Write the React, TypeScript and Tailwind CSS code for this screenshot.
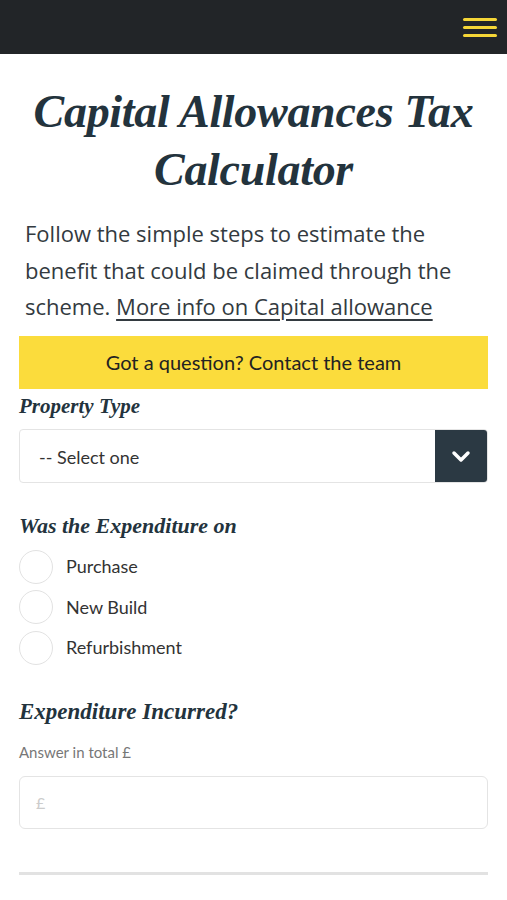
export default function App() {
  const options = ['Purchase', 'New Build', 'Refurbishment'];
  const serif = "font-['Liberation_Serif',serif] italic font-bold text-[#23333d]";
  return (
    <div className="min-h-screen bg-white font-['Lato',sans-serif]">
      <header className="h-[54px] bg-[#222528] flex items-center justify-end pr-[10px]">
        <div className="flex flex-col gap-[5px] w-[34px]">
          <span className="block h-[3px] bg-[#f5d637] rounded-full" />
          <span className="block h-[3px] bg-[#f5d637] rounded-full" />
          <span className="block h-[3px] bg-[#f5d637] rounded-full" />
        </div>
      </header>

      <main className="px-[19px]">
        <h1 className={`${serif} text-center text-[46px] leading-[58px] mt-[29px] tracking-[-0.3px]`}>
          Capital Allowances Tax Calculator
        </h1>
        <p className="font-['Open_Sans',sans-serif] text-[22px] leading-[36.5px] text-[#333a40] pl-[6px] pr-[30px] mt-[16px]">
          Follow the simple steps to estimate the benefit that could be claimed through the scheme.{' '}
          <a href="#" className="underline underline-offset-4">More info on Capital allowance</a>
        </p>

        <button className="w-full h-[53px] mt-[11px] bg-[#fbdc3c] text-[#222] text-[20px]">
          Got a question? Contact the team
        </button>

        <h2 className={`${serif} text-[21px] leading-[32px] mt-[1px]`}>Property Type</h2>
        <div className="mt-[7px] h-[54px] flex border border-[#e4e4e4] rounded-[4px] overflow-hidden">
          <div className="flex-1 flex items-center pl-[19px] pt-[4px] text-[18px] text-[#333]">-- Select one</div>
          <div className="w-[52px] bg-[#2b3943] flex items-center justify-center">
            <svg width="20" height="14" viewBox="0 0 20 14" fill="none">
              <path d="M3 4l7 7 7-7" stroke="white" strokeWidth="3.5" strokeLinecap="round" strokeLinejoin="round" />
            </svg>
          </div>
        </div>

        <h2 className={`${serif} text-[22px] leading-[32px] mt-[27px]`}>Was the Expenditure on</h2>
        <div className="mt-[8px] flex flex-col gap-[6.5px]">
          {options.map(o => (
            <label key={o} className="flex items-center gap-[13px] h-[34px]">
              <span className="w-[34px] h-[34px] rounded-full border border-[#e2e2e2]" />
              <span className="text-[18px] text-[#333]">{o}</span>
            </label>
          ))}
        </div>

        <h2 className={`${serif} text-[23px] leading-[32px] mt-[31px]`}>Expenditure Incurred?</h2>
        <p className="text-[15px] text-[#777] mt-[13px]">Answer in total £</p>
        <div className="mt-[13px] h-[53px] border border-[#e4e4e4] rounded-[6px] flex items-center pl-[16px] text-[16px] text-[#ccc]">
          £
        </div>

        <div className="mt-[43px] h-[3px] bg-[#e2e2e2]" />
      </main>
    </div>
  );
}
